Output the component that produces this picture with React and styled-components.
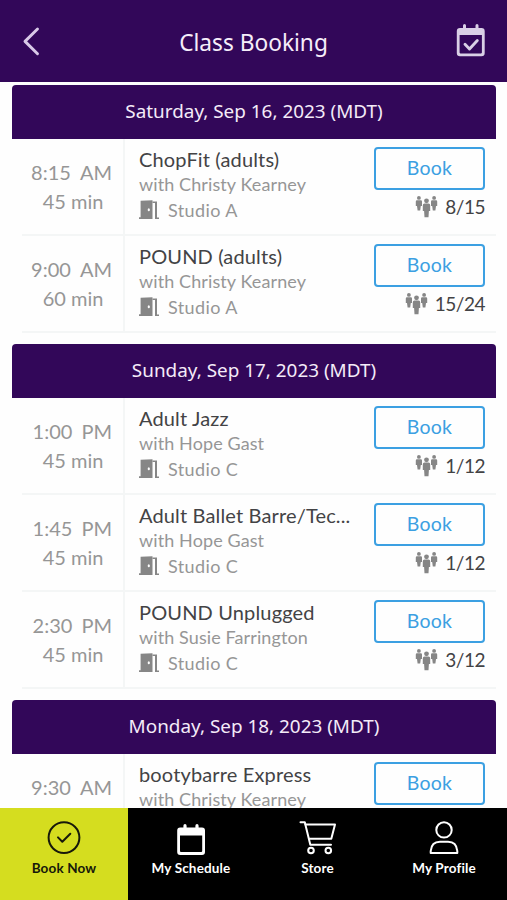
import React from "react";
import styled, { createGlobalStyle } from "styled-components";

const colors = {
  primary: "#320759",
  accent: "#d5dd1f",
  action: "#3ca0e2",
  text: "#434345",
  muted: "#969696",
  line: "#f4f6f6",
};

const days = [
  {
    date: "Saturday, Sep 16, 2023 (MDT)",
    classes: [
      { time: "8:15", half: "AM", length: "45 min", title: "ChopFit (adults)", teacher: "Christy Kearney", room: "Studio A", count: "8/15" },
      { time: "9:00", half: "AM", length: "60 min", title: "POUND (adults)", teacher: "Christy Kearney", room: "Studio A", count: "15/24" },
    ],
  },
  {
    date: "Sunday, Sep 17, 2023 (MDT)",
    classes: [
      { time: "1:00", half: "PM", length: "45 min", title: "Adult Jazz", teacher: "Hope Gast", room: "Studio C", count: "1/12" },
      { time: "1:45", half: "PM", length: "45 min", title: "Adult Ballet Barre/Tec...", teacher: "Hope Gast", room: "Studio C", count: "1/12" },
      { time: "2:30", half: "PM", length: "45 min", title: "POUND Unplugged", teacher: "Susie Farrington", room: "Studio C", count: "3/12" },
    ],
  },
  {
    date: "Monday, Sep 18, 2023 (MDT)",
    classes: [
      { time: "9:30", half: "AM", title: "bootybarre Express", teacher: "Christy Kearney" },
    ],
  },
];

export default function App() {
  return (
    <Screen>
      <GlobalStyle />
      <Header>
        <IconButton aria-label="Back">
          <BackIcon />
        </IconButton>
        <HeaderTitle>Class Booking</HeaderTitle>
        <IconButton aria-label="My bookings">
          <CalendarCheckIcon />
        </IconButton>
      </Header>
      <Schedule>
        {days.map((day) => (
          <Day key={day.date}>
            <DayTitle>{day.date}</DayTitle>
            {day.classes.map((item) => (
              <ClassItem key={item.time} item={item} />
            ))}
          </Day>
        ))}
      </Schedule>
      <TabBar>
        <Tab $active>
          <CheckCircleIcon />
          <TabLabel>Book Now</TabLabel>
        </Tab>
        <Tab>
          <CalendarIcon />
          <TabLabel>My Schedule</TabLabel>
        </Tab>
        <Tab>
          <CartIcon />
          <TabLabel>Store</TabLabel>
        </Tab>
        <Tab>
          <ProfileIcon />
          <TabLabel>My Profile</TabLabel>
        </Tab>
      </TabBar>
    </Screen>
  );
}

function ClassItem({ item }) {
  return (
    <ClassRow>
      <TimeCol>
        <Time>
          <span>{item.time}</span>
          <span>{item.half}</span>
        </Time>
        {item.length && <Length>{item.length}</Length>}
      </TimeCol>
      <InfoCol>
        <ClassTitle>{item.title}</ClassTitle>
        <Teacher>with {item.teacher}</Teacher>
        {item.room && (
          <Room>
            <DoorIcon />
            {item.room}
          </Room>
        )}
      </InfoCol>
      <BookCol>
        <BookButton>Book</BookButton>
        {item.count && (
          <Spots>
            <PeopleIcon />
            {item.count}
          </Spots>
        )}
      </BookCol>
    </ClassRow>
  );
}

const BackIcon = () => (
  <svg width="30" height="36" viewBox="0 0 30 36" fill="none" stroke="#d9c9e8" strokeWidth="2.9" strokeLinecap="round" strokeLinejoin="round">
    <path d="M22.500 5 10 17.400 22.500 29.800" />
  </svg>
);

const CalendarCheckIcon = () => (
  <svg width="30" height="36" viewBox="0 0 30 36" fill="#d9cfe6">
    <path
      fillRule="evenodd"
      d="M4 4H7V1.500a1.500 1.500 0 0 1 3 0V4H19.500V1.500a1.500 1.500 0 0 1 3 0V4H25.500a3.200 3.200 0 0 1 3.200 3.200V29a3.200 3.200 0 0 1-3.200 3.200H4A3.200 3.200 0 0 1 .8 29V7.200A3.200 3.200 0 0 1 4 4ZM3.600 11V28.600a.8.8 0 0 0 .8.8H25.100a.8.8 0 0 0 .8-.8V11Z"
    />
    <path d="m9 20.300 4.500 4.600 7.800-8.300" fill="none" stroke="#d9cfe6" strokeWidth="2.900" strokeLinecap="round" strokeLinejoin="round" />
  </svg>
);

const DoorIcon = () => (
  <svg width="21" height="20" viewBox="0 0 21 20" fill="#868686">
    <path fillRule="evenodd" d="M1.600 .8 13.500 .3V19H0V17.300H1.600ZM9.800 8.200A1.100 1.500 0 1 0 9.800 11.200 1.100 1.500 0 1 0 9.800 8.200Z" />
    <path d="M13.500 1.400H18V17.400H20V19H16V3H13.500Z" />
  </svg>
);

const PeopleIcon = () => (
  <svg width="23" height="24" viewBox="0 0 23 24" fill="#868686">
    <circle cx="3.900" cy="2.900" r="1.900" />
    <path d="M2 5.200H5.800Q7 5.200 7 6.400V11H5.800L5.200 15.500H2.600L2 11H.8V6.400Q.8 5.200 2 5.200Z" />
    <circle cx="19.100" cy="2.900" r="1.900" />
    <path d="M17.200 5.200H21Q22.200 5.200 22.200 6.400V11H21L20.400 15.500H17.800L17.200 11H16V6.400Q16 5.200 17.200 5.200Z" />
    <circle cx="11.500" cy="5.800" r="2.400" />
    <path d="M9.500 8.600H13.500Q15.200 8.600 15.200 10.200V16H13.900L13.500 22.300H9.500L9.100 16H7.800V10.200Q7.800 8.600 9.500 8.600Z" />
  </svg>
);

const CheckCircleIcon = () => (
  <svg width="38" height="36" viewBox="0 0 38 36" fill="none" stroke="#17190a" strokeWidth="2" strokeLinecap="round" strokeLinejoin="round">
    <circle cx="19" cy="17.600" r="15.400" />
    <path d="m13 17.400 4.300 4.300 8-7.900" />
  </svg>
);

const CalendarIcon = () => (
  <svg width="38" height="36" viewBox="0 0 38 36" fill="#fff">
    <path
      fillRule="evenodd"
      d="M8.200 7.500H11.400V5.700a1.600 1.600 0 0 1 3.200 0V7.500H23.400V5.700a1.600 1.600 0 0 1 3.200 0V7.500H30a3 3 0 0 1 3 3V32a3 3 0 0 1-3 3H8.200a3 3 0 0 1-3-3V10.500a3 3 0 0 1 3-3ZM8 15.400V31q0 1 1 1H29.200q1 0 1-1V15.400Z"
    />
  </svg>
);

const CartIcon = () => (
  <svg width="38" height="36" viewBox="0 0 38 36" fill="none" stroke="#fff" strokeWidth="2" strokeLinecap="round" strokeLinejoin="round">
    <path d="M1.500 2.200H5.800L11.300 24.800H32" />
    <path d="M6.500 4.500H36L32.300 18.700H10" />
    <circle cx="12" cy="30.500" r="2.800" />
    <circle cx="29.300" cy="30.500" r="2.800" />
  </svg>
);

const ProfileIcon = () => (
  <svg width="38" height="36" viewBox="0 0 38 36" fill="none" stroke="#fff" strokeWidth="2" strokeLinejoin="round">
    <circle cx="19" cy="9.900" r="7.700" />
    <path d="M5.700 33V31Q6.500 21.800 15 21.800H23Q31.500 21.800 32.300 31V33Z" />
  </svg>
);

const GlobalStyle = createGlobalStyle`
  * {
    box-sizing: border-box;
  }

  body {
    margin: 0;
    background: #fefefe;
    font-family: Lato, "Open Sans", sans-serif;
  }

  button {
    padding: 0;
    font-family: inherit;
    background: none;
  }

  svg {
    display: block;
    flex-shrink: 0;
  }
`;

const Screen = styled.div`
  width: 507px;
  height: 900px;
  display: flex;
  flex-direction: column;
  overflow: hidden;
`;

const Header = styled.header`
  height: 81.500px;
  flex-shrink: 0;
  padding: 3px 20px 0 15px;
  display: flex;
  align-items: center;
  justify-content: space-between;
  background: ${colors.primary};
`;

const IconButton = styled.button`
  width: 31px;
  height: 36px;
  border: 0;
`;

const HeaderTitle = styled.h1`
  margin: 0 0 0 5px;
  font: 400 22.700px "Noto Sans", sans-serif;
  color: #f6eefa;
`;

const Schedule = styled.main`
  flex: 1;
  min-height: 0;
  padding: 3px 11px 0 12px;
  overflow: hidden;
`;

const Day = styled.section`
  margin-bottom: 11px;
`;

const DayTitle = styled.h2`
  height: 54px;
  margin: 0;
  border-radius: 4px 4px 0 0;
  background: ${colors.primary};
  color: #f4ebf8;
  font: 400 18.900px/52px "Noto Sans", sans-serif;
  text-align: center;
`;

const ClassRow = styled.article`
  height: 97px;
  margin-left: 10px;
  display: grid;
  grid-template-columns: 103px 1fr 122px;
  border-bottom: 2px solid ${colors.line};
`;

const TimeCol = styled.div`
  padding: 19px 12px 0 8px;
  border-right: 2px solid ${colors.line};
  color: ${colors.muted};
  font-size: 20px;
  line-height: 29px;
`;

const Time = styled.div`
  display: flex;
  justify-content: flex-end;
  gap: 9px;
  margin-right: -1px;
`;

const Length = styled.div`
  padding-left: 5px;
  text-align: center;
`;

const InfoCol = styled.div`
  padding: 8px 0 0 14px;
  white-space: nowrap;
`;

const ClassTitle = styled.h3`
  margin: 0;
  color: ${colors.text};
  font-size: 20px;
  font-weight: 400;
  line-height: 25px;
  letter-spacing: 0.15px;
`;

const Teacher = styled.div`
  color: ${colors.muted};
  font-size: 18px;
  line-height: 25px;
  letter-spacing: 0.1px;
`;

const Room = styled.div`
  display: flex;
  align-items: center;
  gap: 8px;
  color: ${colors.muted};
  font-size: 18px;
  line-height: 26px;
  letter-spacing: 0.4px;
`;

const BookCol = styled.div`
  padding: 8px 11px 0 0;
  display: flex;
  flex-direction: column;
  align-items: flex-end;
`;

const BookButton = styled.button`
  width: 111px;
  height: 43.500px;
  padding-bottom: 1px;
  border: 2px solid ${colors.action};
  border-radius: 4px;
  color: ${colors.action};
  font-size: 19.500px;
  letter-spacing: 0.2px;
`;

const Spots = styled.div`
  display: flex;
  align-items: center;
  gap: 7px;
  margin-top: 4px;
  color: ${colors.text};
  font-size: 19px;
  line-height: 26px;
  letter-spacing: -0.5px;
`;

const TabBar = styled.nav`
  height: 92px;
  flex-shrink: 0;
  display: grid;
  grid-template-columns: 128px 126px 127px 126px;
  background: #000;
`;

const Tab = styled.div`
  padding-top: 12px;
  display: flex;
  flex-direction: column;
  align-items: center;
  background: ${(props) => (props.$active ? colors.accent : "#000")};
  color: ${(props) => (props.$active ? "#17190a" : "#fff")};
`;

const TabLabel = styled.span`
  margin-top: 3px;
  font-size: 13.500px;
  font-weight: 700;
  line-height: 18px;
  letter-spacing: 0.15px;
`;
